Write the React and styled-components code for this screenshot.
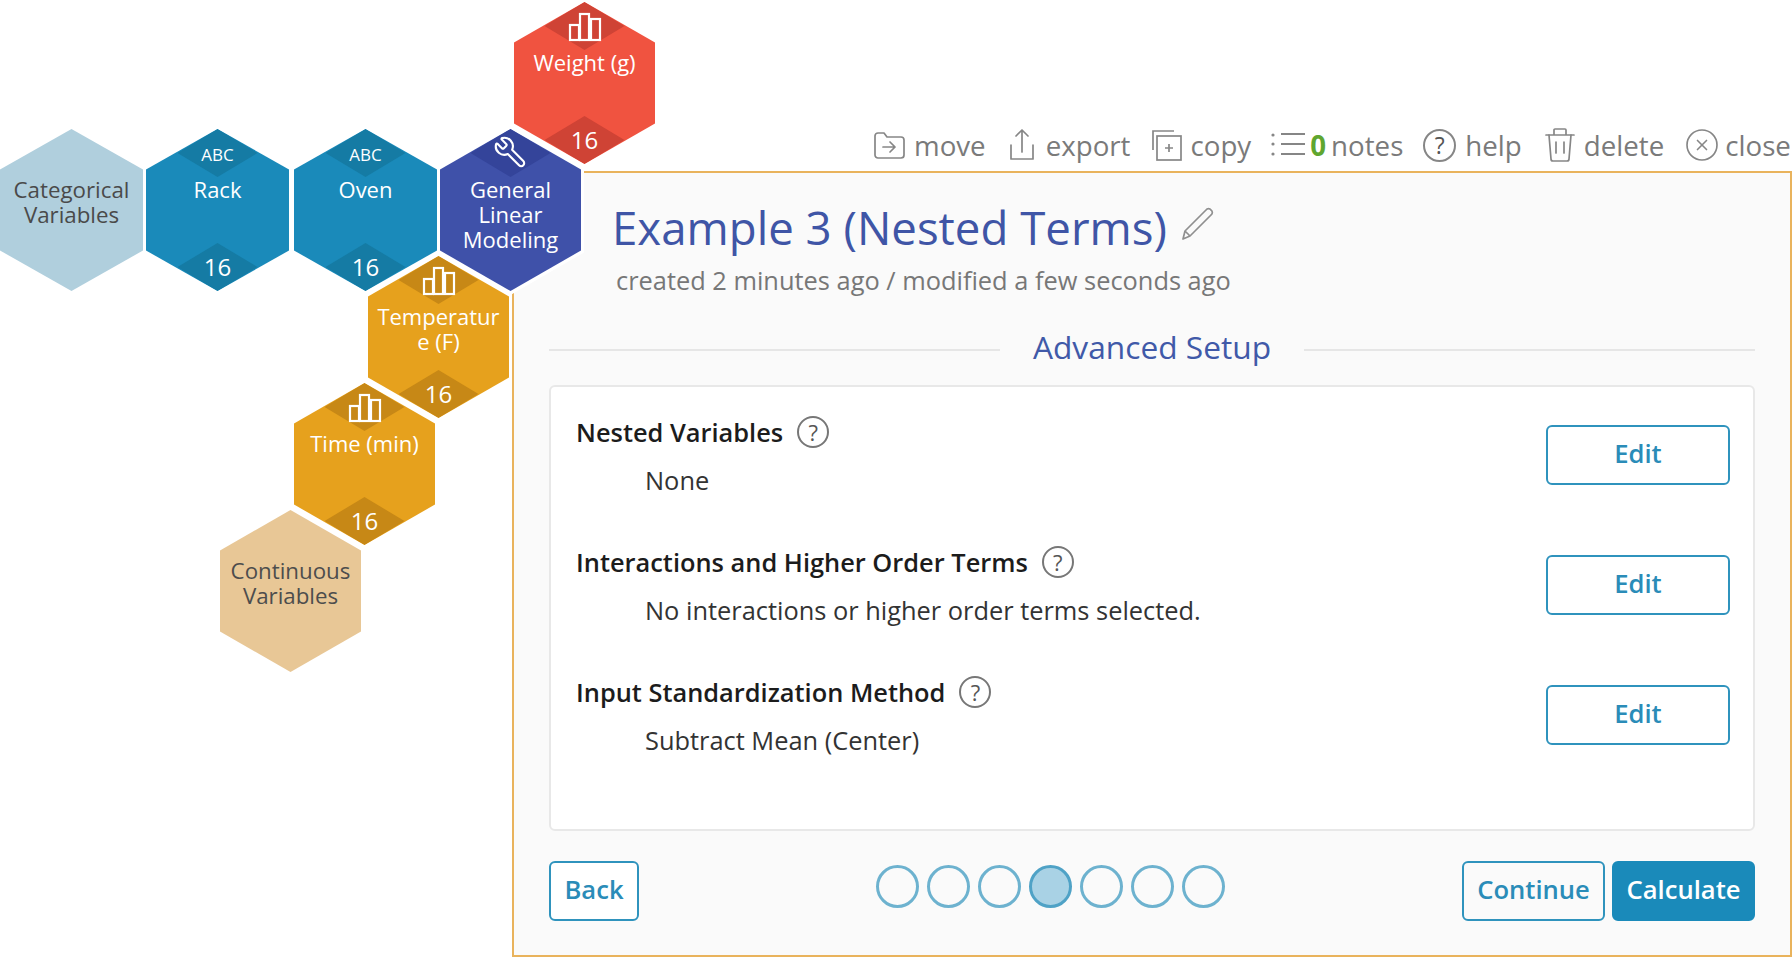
import React from "react";
import styled, { createGlobalStyle } from "styled-components";
import { Wrench, CircleX } from "lucide-react";

const GlobalStyle = createGlobalStyle`
  html, body {
    margin: 0;
    padding: 0;
    background: #fff;
    overflow: hidden;
  }
  * {
    box-sizing: border-box;
  }
`;

const HEX_SHAPE =
  "polygon(50% 0, 100% 25%, 100% 75%, 50% 100%, 0 75%, 0 25%)";

const Page = styled.div`
  position: relative;
  width: 1792px;
  height: 958px;
  overflow: hidden;
  font-family: "Open Sans", "Noto Sans", sans-serif;
`;

/* toolbar */
const Toolbar = styled.div`
  height: 171px;
  padding-left: 874px;
  display: flex;
  align-items: flex-end;
  padding-bottom: 6px;
  white-space: nowrap;
`;

const ToolItem = styled.div`
  display: flex;
  align-items: center;
  height: 40px;
  margin-right: ${(p) => p.$after}px;
  color: #7a7a7a;
  font-size: 27.7px;
  line-height: 40px;

  svg {
    flex: none;
    color: #868686;
  }
`;

const ToolLabel = styled.span`
  margin-left: ${(p) => p.$gap || 9}px;
`;

const NoteCount = styled.span`
  margin-left: 5px;
  color: #5fa630;
  font-weight: 700;
`;

const HelpMark = styled.span`
  flex: none;
  display: inline-flex;
  align-items: center;
  justify-content: center;
  width: ${(p) => p.$size}px;
  height: ${(p) => p.$size}px;
  border: 2px solid ${(p) => p.$line};
  border-radius: 50%;
  color: #555;
  font-size: ${(p) => p.$size - 10}px;
  font-weight: 400;
`;

/* main panel */
const Panel = styled.section`
  margin-left: 512px;
  height: 786px;
  border: 2px solid #e9b35c;
  background: #fafafa;
  padding: 24px 35px 0 35px;
`;

const TitleRow = styled.div`
  display: flex;
  align-items: center;
  padding-left: 63px;
  height: 60px;
`;

const Title = styled.h1`
  margin: 0;
  color: #3f55a6;
  font-size: 45.6px;
  font-weight: 400;
  line-height: 58px;
`;

const PencilIcon = styled.svg`
  margin-left: 14px;
  margin-top: -6px;
  width: 34px;
  height: 34px;
`;

const Subtitle = styled.div`
  margin-top: 5px;
  padding-left: 67px;
  color: #777;
  font-size: 25.4px;
  line-height: 36px;
`;

const SectionHead = styled.div`
  margin-top: 29px;
  display: flex;
  align-items: center;
  gap: 33px;
`;

const SectionLine = styled.div`
  flex: 1;
  height: 2px;
  margin-top: 6px;
  background: #e6e6e6;
`;

const SectionTitle = styled.h2`
  margin: 0;
  color: #4059a8;
  font-size: 31.7px;
  font-weight: 400;
  line-height: 40px;
`;

const Card = styled.div`
  margin-top: 18px;
  height: 446px;
  border: 2px solid #e8e8e8;
  border-radius: 6px;
  background: #fff;
  padding: 27px 23px 0 25px;
`;

const Row = styled.div`
  height: 130px;
  display: flex;
  justify-content: space-between;
  align-items: flex-start;
`;

const RowHead = styled.div`
  display: flex;
  align-items: center;
  gap: 14px;
  height: 36px;
  color: #1c1c1c;
  font-size: 25.4px;
  font-weight: 600;
`;

const RowValue = styled.div`
  margin-top: 12px;
  padding-left: 69px;
  color: #333;
  font-size: 25.4px;
  line-height: 36px;
`;

const OutlineButton = styled.button`
  width: ${(p) => p.$width}px;
  height: 60px;
  margin: 0;
  padding: 0 0 3px;
  border: 2px solid #2f93bd;
  border-radius: 6px;
  background: ${(p) => p.$fill || "transparent"};
  color: #2a8cb8;
  font-family: inherit;
  font-size: 25.6px;
  font-weight: 600;
`;

const EditButton = styled(OutlineButton)`
  margin-top: 11px;
`;

const Footer = styled.div`
  margin-top: 30px;
  display: flex;
  justify-content: space-between;
  align-items: flex-start;
`;

const Dots = styled.div`
  margin-top: 4px;
  display: flex;
  gap: 8px;
`;

const Dot = styled.div`
  width: 43px;
  height: 43px;
  border-radius: 50%;
  border: 3px solid ${(p) => (p.$on ? "#4fa2c6" : "#6db2cf")};
  background: ${(p) => (p.$on ? "#a9d2e5" : "transparent")};
`;

const FooterRight = styled.div`
  display: flex;
  gap: 7px;
`;

const SolidButton = styled(OutlineButton)`
  border-color: #1a8aba;
  background: #1a8aba;
  color: #fff;
`;

/* hex nodes sit on a free canvas over the panel */
const HexOutline = styled.div`
  position: absolute;
  left: ${(p) => p.$x - 3}px;
  top: ${(p) => p.$y - 4}px;
  width: ${(p) => p.$w + 6}px;
  height: 170px;
  background: #fff;
  clip-path: ${HEX_SHAPE};
`;

const HexBody = styled.div`
  position: absolute;
  left: 3px;
  top: 4px;
  right: 3px;
  bottom: 4px;
  background: ${(p) => p.$color};
  clip-path: ${HEX_SHAPE};
  color: ${(p) => p.$ink};
`;

const Diamond = styled.div`
  position: absolute;
  left: 50%;
  width: 80px;
  height: 48px;
  margin-left: -40px;
  ${(p) => (p.$bottom ? "bottom: 0;" : "top: 0;")}
  background: ${(p) => p.$color};
  clip-path: polygon(50% 0, 100% 50%, 50% 100%, 0 50%);
`;

const HexTop = styled.div`
  position: absolute;
  left: 0;
  right: 0;
  top: ${(p) => p.$top}px;
  display: flex;
  justify-content: center;
  font-size: 17px;
  font-weight: 500;
  line-height: 20px;
  color: #fff;
`;

const HexCount = styled.div`
  position: absolute;
  left: 0;
  right: 0;
  bottom: 9px;
  text-align: center;
  color: #fff;
  font-size: 24px;
  font-weight: 500;
  line-height: 30px;
`;

const HexLabel = styled.div`
  position: absolute;
  left: 0;
  right: 0;
  top: 48px;
  padding: 0 6px;
  text-align: center;
  font-size: ${(p) => p.$size}px;
  font-weight: ${(p) => p.$weight};
  line-height: 25px;
  overflow-wrap: anywhere;
`;

const FlippedWrench = styled(Wrench)`
  margin-left: -2px;
  transform: scaleX(-1);
`;

const BarsIcon = () => (
  <svg width="34" height="30" viewBox="0 0 34 30" fill="none" stroke="#fff" strokeWidth="2.2">
    <rect x="2" y="13" width="9" height="15" />
    <rect x="12" y="2" width="9" height="26" />
    <rect x="23" y="7" width="9" height="21" />
  </svg>
);

const MoveIcon = () => (
  <svg width="31" height="30" viewBox="0 0 31 30" fill="none" stroke="currentColor" strokeWidth="1.7" strokeLinejoin="round" strokeLinecap="round">
    <path d="M1 6 a3 3 0 0 1 3-3 h6 l3 4 h14 a3 3 0 0 1 3 3 v15 a3 3 0 0 1-3 3 H4 a3 3 0 0 1-3-3 Z" />
    <path d="M9 17 h12 M16 12 l5 5 l-5 5" />
  </svg>
);

const ExportIcon = () => (
  <svg width="26" height="34" viewBox="0 0 26 34" fill="none" stroke="currentColor" strokeWidth="1.7" strokeLinecap="round" strokeLinejoin="round">
    <path d="M2 17 v14 h22 v-14" />
    <path d="M13 24 V2 M7 8 l6-6 l6 6" />
  </svg>
);

const CopyIcon = () => (
  <svg width="31" height="32" viewBox="0 0 31 32" fill="none" stroke="currentColor" strokeWidth="1.7">
    <path d="M2 21 V2 h21" />
    <rect x="6" y="7" width="24" height="24" />
    <path d="M18 15 v8 M14 19 h8" />
  </svg>
);

const NotesIcon = () => (
  <svg width="34" height="28" viewBox="0 0 34 28" fill="none" stroke="currentColor">
    <circle cx="2" cy="4" r="1.6" fill="currentColor" stroke="none" />
    <circle cx="2" cy="13" r="1.6" fill="currentColor" stroke="none" />
    <circle cx="2" cy="23" r="1.6" fill="currentColor" stroke="none" />
    <path d="M10 3 h24 M10 13 h24 M10 23 h24" strokeWidth="1.8" />
  </svg>
);

const TrashIcon = () => (
  <svg width="30" height="36" viewBox="0 0 30 36" fill="none" stroke="currentColor" strokeWidth="1.7" strokeLinecap="round" strokeLinejoin="round">
    <path d="M1 8 h28 M9 8 V3 a1 1 0 0 1 1-1 h10 a1 1 0 0 1 1 1 v5" />
    <path d="M4 8 l2 24 a2 2 0 0 0 2 2 h14 a2 2 0 0 0 2-2 l2-24" />
    <path d="M11 15 v11 M19 15 v11" />
  </svg>
);

const hexes = [
  { x: 0, y: 129, w: 143, color: "#b0cfdd", ink: "#4a4a4a", lines: "Categorical Variables", plain: true },
  { x: 146, y: 129, w: 143, color: "#1a8aba", dark: "#157ba4", top: "ABC", count: 16, lines: "Rack" },
  { x: 294, y: 129, w: 143, color: "#1a8aba", dark: "#157ba4", top: "ABC", count: 16, lines: "Oven" },
  { x: 514, y: 2, w: 141, color: "#f05340", dark: "#cf4335", top: "bars", count: 16, lines: "Weight (g)" },
  { x: 440, y: 129, w: 141, color: "#3f51a9", dark: "#34449a", top: "wrench", lines: "General Linear Modeling" },
  { x: 368, y: 256, w: 141, color: "#e6a11d", dark: "#c78816", top: "bars", count: 16, lines: "Temperature (F)" },
  { x: 294, y: 383, w: 141, color: "#e6a11d", dark: "#c78816", top: "bars", count: 16, lines: "Time (min)" },
  { x: 220, y: 510, w: 141, color: "#e8c796", ink: "#4d4d4d", lines: "Continuous Variables", plain: true },
];

const rows = [
  { head: "Nested Variables", value: "None" },
  { head: "Interactions and Higher Order Terms", value: "No interactions or higher order terms selected." },
  { head: "Input Standardization Method", value: "Subtract Mean (Center)" },
];

const HexNode = ({ hex }) => (
  <HexOutline $x={hex.x} $y={hex.y} $w={hex.w}>
    <HexBody $color={hex.color} $ink={hex.ink || "#fff"}>
      {hex.dark && <Diamond $color={hex.dark} />}
      {hex.count && <Diamond $bottom $color={hex.dark} />}
      {hex.top === "ABC" && <HexTop $top={16}>ABC</HexTop>}
      {hex.top === "bars" && (
        <HexTop $top={10}>
          <BarsIcon />
        </HexTop>
      )}
      {hex.top === "wrench" && (
        <HexTop $top={6}>
          <FlippedWrench size={34} color="#fff" strokeWidth={1.5} />
        </HexTop>
      )}
      <HexLabel $weight={hex.plain ? 400 : 500} $size={hex.plain ? 22.3 : 22}>
        {hex.lines}
      </HexLabel>
      {hex.count && <HexCount>{hex.count}</HexCount>}
    </HexBody>
  </HexOutline>
);

const App = () => {
  return (
    <Page>
      <GlobalStyle />
      <Toolbar>
        <ToolItem $after={23}>
          <MoveIcon />
          <ToolLabel>move</ToolLabel>
        </ToolItem>
        <ToolItem $after={20}>
          <ExportIcon />
          <ToolLabel $gap={11}>export</ToolLabel>
        </ToolItem>
        <ToolItem $after={20}>
          <CopyIcon />
          <ToolLabel>copy</ToolLabel>
        </ToolItem>
        <ToolItem $after={20}>
          <NotesIcon />
          <NoteCount>0</NoteCount>
          <ToolLabel $gap={5}>notes</ToolLabel>
        </ToolItem>
        <ToolItem $after={23}>
          <HelpMark $size={33} $line="#868686">?</HelpMark>
          <ToolLabel>help</ToolLabel>
        </ToolItem>
        <ToolItem $after={20}>
          <TrashIcon />
          <ToolLabel>delete</ToolLabel>
        </ToolItem>
        <ToolItem $after={0}>
          <CircleX size={36} strokeWidth={1.1} />
          <ToolLabel $gap={5}>close</ToolLabel>
        </ToolItem>
      </Toolbar>

      <Panel>
        <TitleRow>
          <Title>Example 3 (Nested Terms)</Title>
          <PencilIcon viewBox="0 0 34 34" fill="none" stroke="#8f8f8f" strokeWidth="1.7" strokeLinejoin="round">
            <path d="M2 32 L4 24 L25 3 a3 3 0 0 1 5 0 a3 3 0 0 1 0 5 L9 29 Z M4 24 L9 29" />
          </PencilIcon>
        </TitleRow>
        <Subtitle>created 2 minutes ago / modified a few seconds ago</Subtitle>

        <SectionHead>
          <SectionLine />
          <SectionTitle>Advanced Setup</SectionTitle>
          <SectionLine />
        </SectionHead>

        <Card>
          {rows.map((row) => (
            <Row key={row.head}>
              <div>
                <RowHead>
                  {row.head}
                  <HelpMark $size={32} $line="#777">?</HelpMark>
                </RowHead>
                <RowValue>{row.value}</RowValue>
              </div>
              <EditButton $width={184} $fill="#fff">Edit</EditButton>
            </Row>
          ))}
        </Card>

        <Footer>
          <OutlineButton $width={90} $fill="#fff">Back</OutlineButton>
          <Dots>
            {[0, 1, 2, 3, 4, 5, 6].map((i) => (
              <Dot key={i} $on={i === 3} />
            ))}
          </Dots>
          <FooterRight>
            <OutlineButton $width={143}>Continue</OutlineButton>
            <SolidButton $width={143}>Calculate</SolidButton>
          </FooterRight>
        </Footer>
      </Panel>

      {hexes.map((hex) => (
        <HexNode key={hex.lines} hex={hex} />
      ))}
    </Page>
  );
};

export default App;
